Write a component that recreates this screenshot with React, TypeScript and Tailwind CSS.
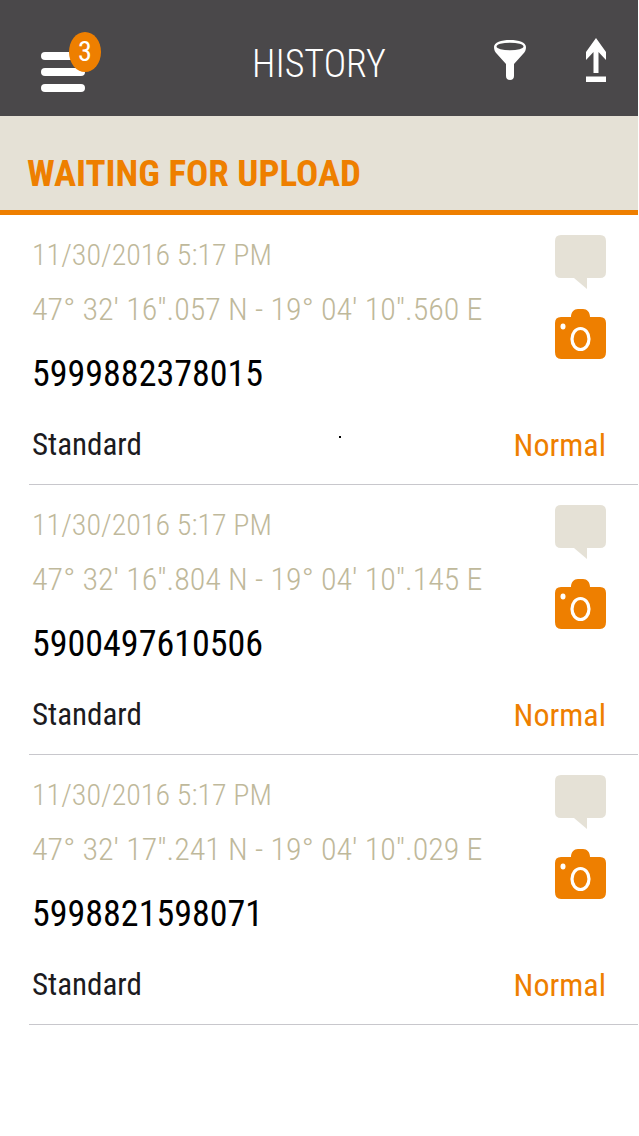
import React from 'react';

const entries = [
  { id: 1, date: '11/30/2016 5:17 PM', position: `47° 32' 16".057 N - 19° 04' 10".560 E`, code: '5999882378015', type: 'Standard', priority: 'Normal', dot: true },
  { id: 2, date: '11/30/2016 5:17 PM', position: `47° 32' 16".804 N - 19° 04' 10".145 E`, code: '5900497610506', type: 'Standard', priority: 'Normal', dot: false },
  { id: 3, date: '11/30/2016 5:17 PM', position: `47° 32' 17".241 N - 19° 04' 10".029 E`, code: '5998821598071', type: 'Standard', priority: 'Normal', dot: false },
];

const FunnelIcon: React.FC = () => (
  <svg width="34" height="42" viewBox="0 0 34 42" aria-hidden="true">
    <path fill="#fff" d="M1 8C1 3.500 8 1 17 1s16 2.500 16 7c0 3-1 5-3 7l-9 10V37c0 2.500-1.500 4-4 4s-4-1.500-4-4V25L4 15C2 13 1 11 1 8Z" />
    <ellipse cx="17" cy="7.500" rx="13.500" ry="3.800" fill="#4a484a" />
  </svg>
);

const UploadIcon: React.FC = () => (
  <svg width="22" height="44" viewBox="0 0 22 44" aria-hidden="true">
    <path fill="#fff" d="M11 0 21 14v8l-7.500-8v21h-5V14L1 22v-8ZM1 38.500h20V44H1Z" />
  </svg>
);

const CommentIcon: React.FC = () => (
  <svg width="51" height="54" viewBox="0 0 51 54" aria-hidden="true">
    <path fill="#e5e1d6" d="M6 0h39q6 0 6 6v31q0 6-6 6H32v11L19 43H6q-6 0-6-6V6q0-6 6-6Z" />
  </svg>
);

const CameraIcon: React.FC = () => (
  <svg width="51" height="50" viewBox="0 0 51 50" aria-hidden="true">
    <path fill="#ee7f00" d="M6 8h10c0-5 3-8 7-8h5c4 0 7 3 7 8h10q6 0 6 6v29q0 7-6 7H6q-6 0-6-7V14q0-6 6-6Z" />
    <ellipse cx="25.500" cy="30" rx="8.500" ry="10.500" fill="none" stroke="#fff" strokeWidth="3.200" />
    <ellipse cx="8" cy="17.500" rx="2.500" ry="3" fill="#fff" />
  </svg>
);

const Entry: React.FC<{ entry: any }> = ({ entry }) => (
  <li className="ml-[29px] border-b border-[#c8c7cc] pl-[3px] pr-8 pt-3 pb-[7px]">
    <div className="flex justify-between">
      <div className="whitespace-nowrap">
        <p className="text-[30px] leading-[55px] font-light text-[#bfb99b]">{entry.date}</p>
        <p className="text-[32px] leading-[54px] font-light text-[#bfb99b]">{entry.position}</p>
        <p className="text-[36px] leading-[77px] text-black">{entry.code}</p>
      </div>
      <div className="flex flex-col gap-5 pt-2">
        <CommentIcon />
        <CameraIcon />
      </div>
    </div>
    <div className="flex items-center justify-between leading-[64px]">
      <span className="text-[31px] text-[#1c1b1f]">{entry.type}</span>
      {entry.dot && <span className="mb-4 ml-6 size-0.5 bg-black" />}
      <span className="text-[32px] text-[#ee7f00]">{entry.priority}</span>
    </div>
  </li>
);

const App: React.FC = () => {
  return (
    <div className="min-h-screen bg-white pr-px font-['Roboto_Condensed','Liberation_Sans_Narrow',Roboto,sans-serif]">
      <header className="grid h-[116px] grid-cols-3 items-center bg-[#4a484a] pt-3 px-[31px] text-white">
        <button aria-label="Menu" className="relative ml-2.5 flex w-11 flex-col gap-2 pt-4">
          <span className="h-2 w-full rounded-full bg-white" />
          <span className="h-2 w-full rounded-full bg-white" />
          <span className="h-2 w-full rounded-full bg-white" />
          <span className="absolute -top-1 left-7 flex h-10 w-8 items-center justify-center rounded-[50%] bg-[#ee7f00] text-[28px]">3</span>
        </button>
        <h1 className="text-center text-[38px] font-light">HISTORY</h1>
        <div className="flex items-center justify-end gap-[58px] pb-2">
          <button aria-label="Filter"><FunnelIcon /></button>
          <button aria-label="Upload"><UploadIcon /></button>
        </div>
      </header>

      <h2 className="h-[99px] border-b-[5px] border-[#ee7f00] bg-[#e5e1d6] pt-5 pl-[27px] text-[37px] leading-[76px] font-bold text-[#ee7f00]">
        WAITING FOR UPLOAD
      </h2>

      <ul>
        {entries.map(e => <Entry key={e.id} entry={e} />)}
      </ul>
    </div>
  );
};

export default App;
